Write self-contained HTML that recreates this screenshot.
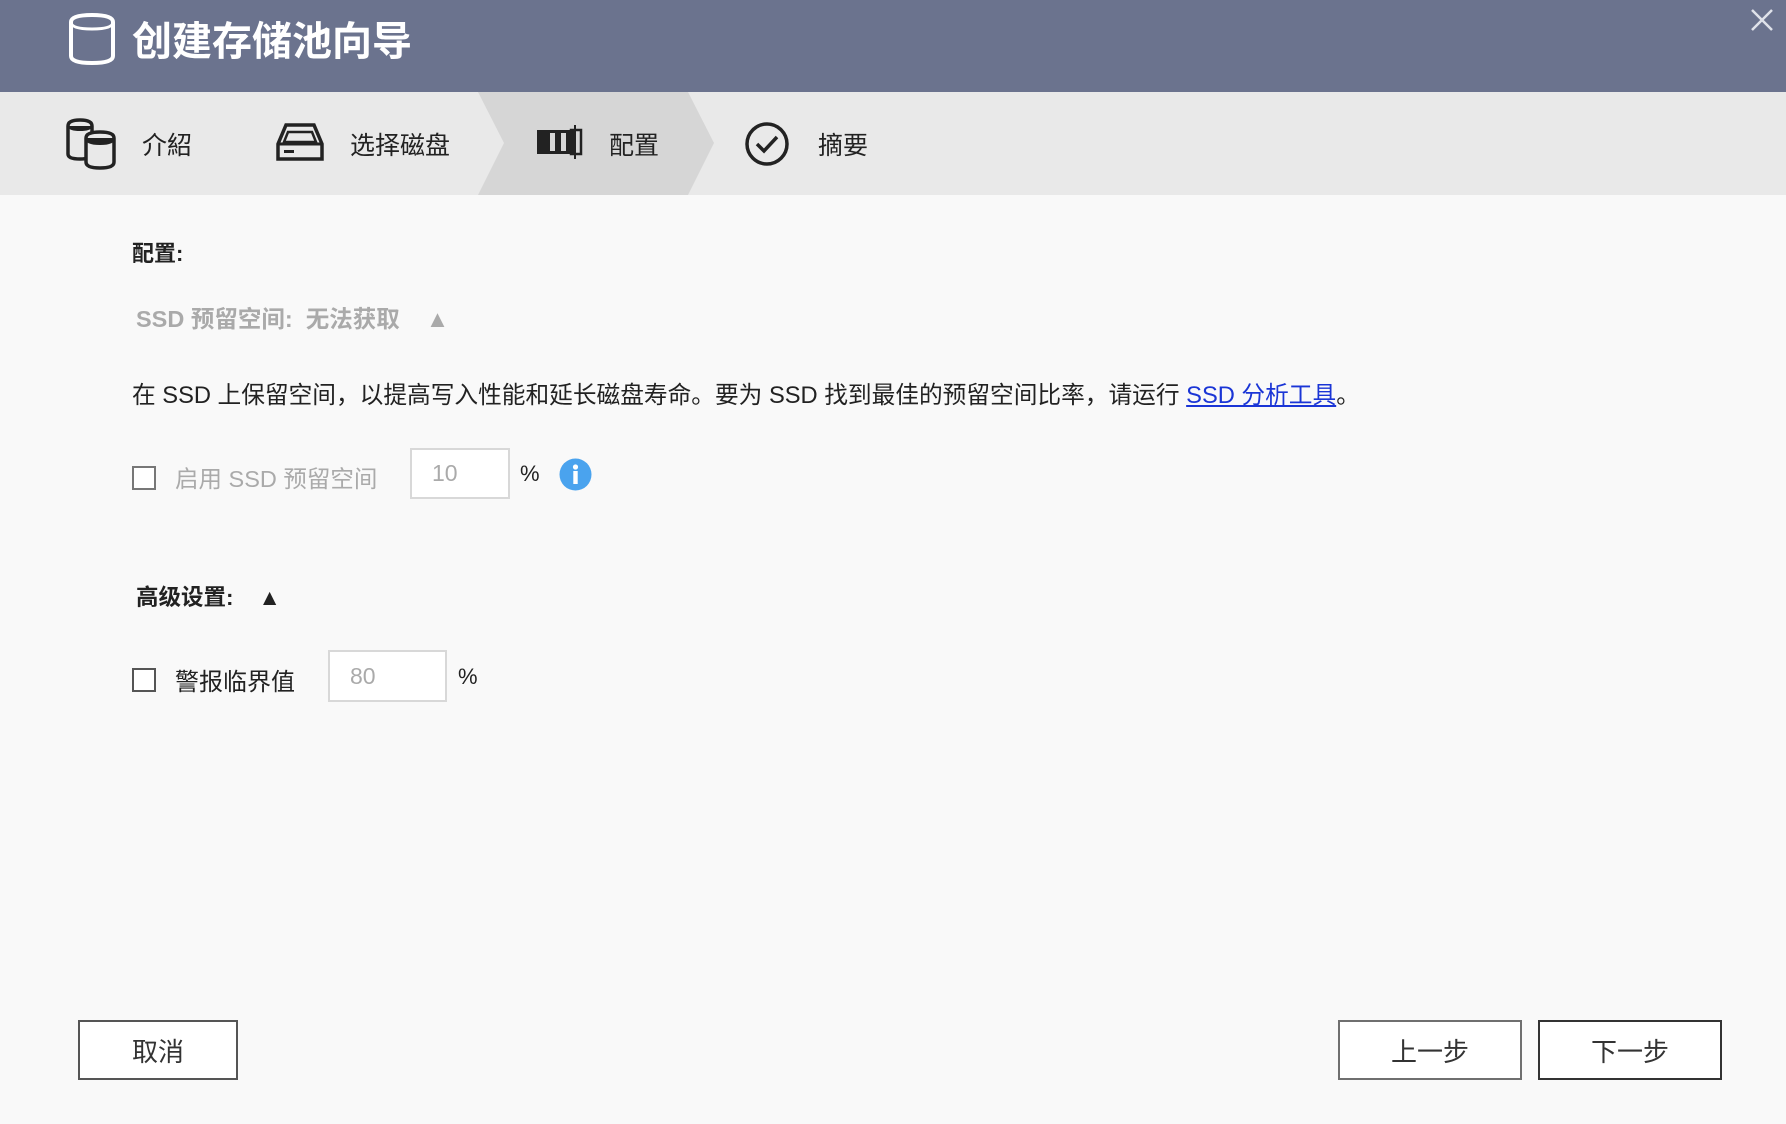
<!DOCTYPE html>
<html><head><meta charset="utf-8"><style>
*{margin:0;padding:0;box-sizing:border-box}
body{width:1786px;height:1124px;background:#f9f9f9;font-family:"Liberation Sans","Noto Sans CJK SC",sans-serif;position:relative;overflow:hidden;color:#222}
.abs{position:absolute;white-space:nowrap}
.hdr{position:absolute;left:0;top:0;width:1786px;height:92px;background:#6b738e}
.steps{position:absolute;left:0;top:92px;width:1786px;height:103px;background:#e9e9e9}
.step{font-size:25px;color:#222;top:126px}
.cb{position:absolute;width:24px;height:24px;border:2px solid #555;background:#fff}
.inp{position:absolute;border:2px solid #d8d8d8;background:#fff;font-size:23px;color:#aaa;padding-left:20px;display:flex;align-items:center}
.btn{position:absolute;background:#fff;font-size:26px;display:flex;align-items:center;justify-content:center;color:#333}
</style></head><body>
<div class="hdr"></div>
<svg class="abs" style="left:66px;top:12px" width="52" height="54" viewBox="0 0 52 54"><path d="M5 10 Q5 3 26 3 Q47 3 47 10 L47 44 Q47 51 26 51 Q5 51 5 44 Z" fill="none" stroke="#fff" stroke-width="4"/><path d="M5 10 Q5 17 26 17 Q47 17 47 10" fill="none" stroke="#fff" stroke-width="3"/></svg>
<div class="abs" style="left:132px;top:9px;font-size:40px;font-weight:bold;color:#fff">创建存储池向导</div>
<svg class="abs" style="left:1750px;top:8px" width="24" height="24"><path d="M2 2 L22 22 M22 2 L2 22" stroke="#dfe2ea" stroke-width="2.5"/></svg>
<div class="steps"></div>
<svg class="abs" style="left:478px;top:92px" width="236" height="103"><polygon points="0,0 210,0 236,51 210,103 0,103 26,51" fill="#d6d6d6"/></svg>
<svg class="abs" style="left:64px;top:118px" width="56" height="52" viewBox="0 0 56 52"><path d="M4 8 Q4 2 16 2 Q28 2 28 8 L28 36 Q28 41 16 41 Q4 41 4 36Z" fill="none" stroke="#222" stroke-width="3.5"/><path d="M4 8 Q4 13 16 13 Q28 13 28 8" fill="#222"/><path d="M22 20 Q22 14 36 14 Q50 14 50 20 L50 44 Q50 50 36 50 Q22 50 22 44Z" fill="#e9e9e9" stroke="#222" stroke-width="3.5"/><path d="M22 20 Q22 26 36 26 Q50 26 50 20" fill="#222" stroke="#222" stroke-width="2"/></svg>
<div class="abs step" style="left:142px">介紹</div>
<svg class="abs" style="left:276px;top:122px" width="48" height="40" viewBox="0 0 48 40"><path d="M10 3 H38 L46 22 V37 H2 V22 Z" fill="none" stroke="#222" stroke-width="3.5"/><path d="M2 22 H46" stroke="#222" stroke-width="3"/><path d="M12 10 H36 L40 20 H8 Z" fill="none" stroke="#222" stroke-width="2.5"/><rect x="8" y="28" width="10" height="3" fill="#222"/></svg>
<div class="abs step" style="left:350px">选择磁盘</div>
<svg class="abs" style="left:535px;top:124px" width="50" height="36" viewBox="0 0 50 36"><rect x="2" y="6" width="38" height="24" fill="#222"/><rect x="15" y="9" width="5" height="18" fill="#d6d6d6"/><rect x="26" y="9" width="5" height="18" fill="#d6d6d6"/><rect x="36" y="6" width="10" height="24" fill="none" stroke="#222" stroke-width="2.5"/><rect x="39" y="1" width="2" height="34" fill="#222"/></svg>
<div class="abs step" style="left:609px">配置</div>
<svg class="abs" style="left:744px;top:121px" width="46" height="46" viewBox="0 0 46 46"><circle cx="23" cy="23" r="20" fill="none" stroke="#222" stroke-width="3.5"/><path d="M13 23 L20 30 L33 16" fill="none" stroke="#222" stroke-width="3.5"/></svg>
<div class="abs step" style="left:818px">摘要</div>

<div class="abs" style="left:132px;top:236px;font-size:22px;font-weight:bold">配置:</div>
<div class="abs" style="left:136px;top:300px;font-size:23.5px;font-weight:bold;color:#aaa">SSD 预留空间:&nbsp; 无法获取 &nbsp;&nbsp;&nbsp;▲</div>
<div class="abs" style="left:132px;top:376px;font-size:23.7px;color:#222">在 SSD 上保留空间，以提高写入性能和延长磁盘寿命。要为 SSD 找到最佳的预留空间比率，请运行 <span style="color:#1a35d6;text-decoration:underline">SSD 分析工具</span>。</div>
<div class="cb" style="left:132px;top:466px;border-color:#777"></div>
<div class="abs" style="left:175px;top:460px;font-size:23.5px;color:#aaa">启用 SSD 预留空间</div>
<div class="inp" style="left:410px;top:448px;width:100px;height:51px">10</div>
<div class="abs" style="left:520px;top:461px;font-size:22px">%</div>
<svg class="abs" style="left:559px;top:458px" width="33" height="33"><circle cx="16.5" cy="16.5" r="16" fill="#4aa3ee"/><circle cx="16.5" cy="9" r="2.6" fill="#fff"/><rect x="14.3" y="13" width="4.4" height="13" fill="#fff"/></svg>

<div class="abs" style="left:136px;top:580px;font-size:22.5px;font-weight:bold">高级设置: &nbsp;&nbsp;&nbsp;▲</div>
<div class="cb" style="left:132px;top:668px"></div>
<div class="abs" style="left:175px;top:662px;font-size:24px">警报临界值</div>
<div class="inp" style="left:328px;top:650px;width:119px;height:52px">80</div>
<div class="abs" style="left:458px;top:664px;font-size:22px">%</div>

<div class="btn" style="left:78px;top:1020px;width:160px;height:60px;border:2px solid #555">取消</div>
<div class="btn" style="left:1338px;top:1020px;width:184px;height:60px;border:2px solid #6f6f6f">上一步</div>
<div class="btn" style="left:1538px;top:1020px;width:184px;height:60px;border:2px solid #333">下一步</div>
</body></html>
